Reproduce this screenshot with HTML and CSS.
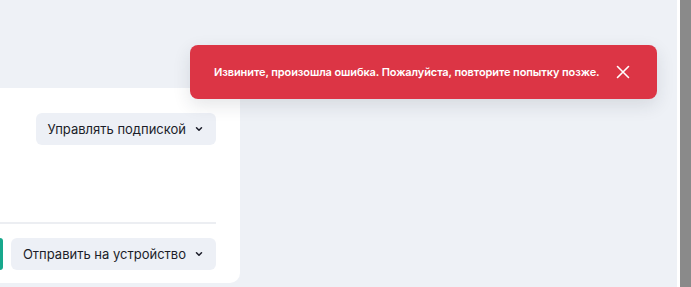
FILE: index.html
```html
<!DOCTYPE html>
<html lang="ru">
  <head>
    <meta charset="UTF-8" />
    <meta name="viewport" content="width=device-width, initial-scale=1.0" />
    <link rel="stylesheet" href="styles.css">
    <title>Подписка</title>
  </head>
  <body>
    <div class="page">
      <main class="content">
        <section class="card">
          <div class="card-top">
            <button class="btn-menu" type="button">
              Управлять подпиской
              <svg class="chevron" viewBox="0 0 10 10" width="10" height="10"><path d="M2.5 3.8 5 6.3 7.5 3.8" /></svg>
            </button>
          </div>
          <div class="card-bottom">
            <button class="btn-green" type="button"></button>
            <button class="btn-menu" type="button">
              Отправить на устройство
              <svg class="chevron" viewBox="0 0 10 10" width="10" height="10"><path d="M2.5 3.8 5 6.3 7.5 3.8" /></svg>
            </button>
          </div>
        </section>

        <div class="toast" role="alert">
          <span class="toast-text">Извините, произошла ошибка. Пожалуйста, повторите попытку позже.</span>
          <button class="toast-close" type="button" aria-label="Закрыть">
            <svg viewBox="0 0 14 14" width="14" height="14"><path d="M1.5 1.5 12.5 12.5M12.5 1.5 1.5 12.5" /></svg>
          </button>
        </div>
      </main>
      <div class="scrollbar"></div>
    </div>
  </body>
</html>
```

FILE: styles.css
```css
body {
  margin: 0;
  font-family: Inter, "Noto Sans", sans-serif;
  background-color: #eef1f6;
  color: #1b1d29;
}

.page {
  display: flex;
  height: 287px;
  overflow: hidden;
}

.content {
  position: relative;
  flex: 1;
  padding-top: 88px;
}

.card {
  width: 240px;
  height: 195px;
  background-color: #fff;
  border-radius: 0 10px 10px 0;
  box-sizing: border-box;
  padding: 25px 24px 0 0;
  display: flex;
  flex-direction: column;
}

.card-top {
  flex: 0 0 111px;
  display: flex;
  justify-content: flex-end;
  align-items: flex-start;
  border-bottom: 2px solid #eceef2;
  box-sizing: border-box;
}

.card-bottom {
  padding-top: 14px;
  display: flex;
  justify-content: space-between;
}

.btn-menu {
  display: flex;
  align-items: center;
  gap: 8px;
  flex-shrink: 0;
  height: 32px;
  padding: 0 12px;
  border: none;
  border-radius: 6px;
  background-color: #edf0f6;
  color: #1b1d29;
  font-family: inherit;
  font-size: 13px;
  white-space: nowrap;
  cursor: pointer;
}

.chevron path {
  fill: none;
  stroke: #1b1d29;
  stroke-width: 1.5;
  stroke-linecap: round;
  stroke-linejoin: round;
}

.btn-green {
  width: 3px;
  height: 32px;
  padding: 0;
  border: none;
  border-radius: 0 6px 6px 0;
  background-color: #17a88c;
}

.toast {
  position: absolute;
  left: 190px;
  top: 45px;
  width: 467px;
  height: 54px;
  box-sizing: border-box;
  padding: 0 27px 0 24px;
  display: flex;
  align-items: center;
  justify-content: space-between;
  background-color: #dc3545;
  border-radius: 8px;
  box-shadow: 0 6px 18px rgba(30, 40, 60, 0.12);
  color: #fff;
}

.toast-text {
  font-size: 11px;
  font-weight: 600;
  letter-spacing: -0.1px;
}

.toast-close {
  padding: 0;
  border: none;
  background: none;
  display: flex;
  cursor: pointer;
}

.toast-close path {
  stroke: #fff;
  stroke-width: 1.6;
  stroke-linecap: round;
}

.scrollbar {
  width: 11px;
  border-left: 3px solid #fff;
  background-color: #8a8a8a;
}
```
